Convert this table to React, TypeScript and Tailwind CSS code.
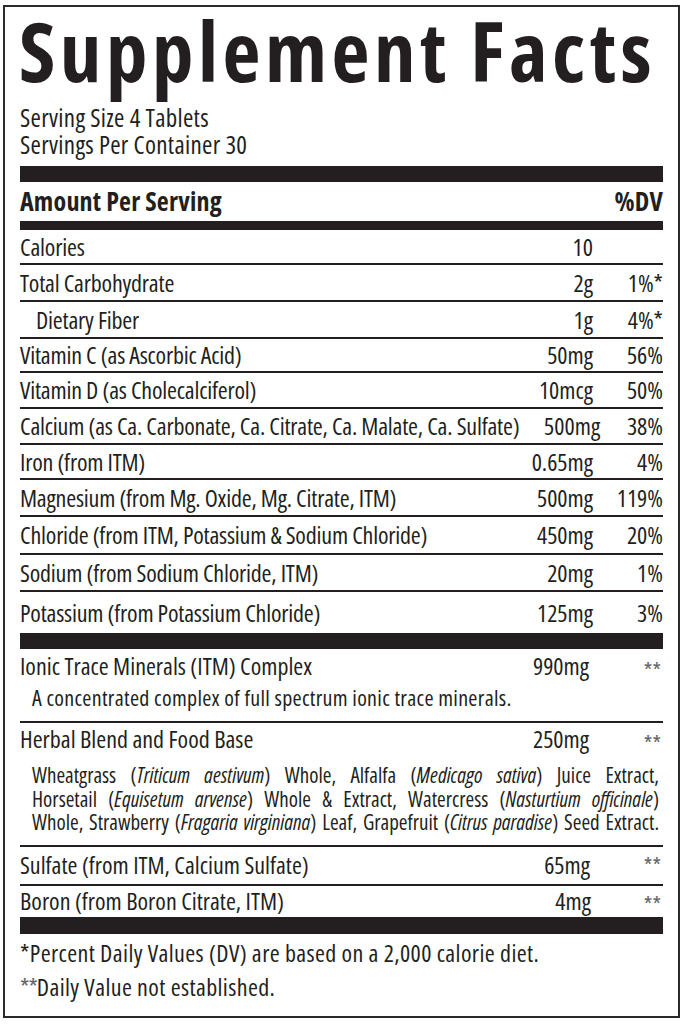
const font = "font-['Open_Sans',sans-serif] font-stretch-[75%]";
const line = "border-b-2 border-[#231f20]";

type Row = { name: string; amount: string; dv: string; indent?: boolean; h: string };

const mainRows: Row[] = [
  { name: "Calories", amount: "10", dv: "", h: "h-[35px]" },
  { name: "Total Carbohydrate", amount: "2g", dv: "1%*", h: "h-[37px]" },
  { name: "Dietary Fiber", amount: "1g", dv: "4%*", indent: true, h: "h-[37px]" },
  { name: "Vitamin C (as Ascorbic Acid)", amount: "50mg", dv: "56%", h: "h-[34px]" },
  { name: "Vitamin D (as Cholecalciferol)", amount: "10mcg", dv: "50%", h: "h-[36px]" },
  { name: "Calcium (as Ca. Carbonate, Ca. Citrate, Ca. Malate, Ca. Sulfate)", amount: "500mg", dv: "38%", h: "h-[36px]" },
  { name: "Iron (from ITM)", amount: "0.65mg", dv: "4%", h: "h-[35px]" },
  { name: "Magnesium (from Mg. Oxide, Mg. Citrate, ITM)", amount: "500mg", dv: "119%", h: "h-[37px]" },
  { name: "Chloride (from ITM, Potassium & Sodium Chloride)", amount: "450mg", dv: "20%", h: "h-[38px]" },
  { name: "Sodium (from Sodium Chloride, ITM)", amount: "20mg", dv: "1%", h: "h-[37px]" },
  { name: "Potassium (from Potassium Chloride)", amount: "125mg", dv: "3%", h: "h-[41px]" },
];

function Stars() {
  return <span className="text-[22px] leading-none text-[#666] self-start mt-[6px]">**</span>;
}

export default function App() {
  return (
    <div className={`bg-white min-h-screen pt-[5px] px-[3px] text-[#231f20] ${font}`}>
      <div className="w-[677px] border-2 border-[#2b2b2b] px-[15px] pt-[0px] pb-[12px]">
        {/* Title */}
        <h1 className="text-[83px] font-bold leading-[86px] font-stretch-[87.5%] tracking-[4.5px] -ml-[1px] whitespace-nowrap">
          Supplement Facts
        </h1>
        <div className="text-[25px] leading-[27px] mt-[11px] tracking-[0.3px]">
          <div>Serving Size 4 Tablets</div>
          <div>Servings Per Container 30</div>
        </div>

        <div className="h-[16px] bg-[#231f20] mt-[8px]" />
        <div className="flex items-center justify-between h-[39px] font-bold text-[26px] tracking-[0.2px]">
          <span>Amount Per Serving</span>
          <span>%DV</span>
        </div>
        <div className="h-[9px] bg-[#231f20]" />

        {mainRows.map((r, i) => (
          <div
            key={r.name}
            className={`flex items-center ${r.h} text-[24px] leading-none ${i < mainRows.length - 1 ? line : ""}`}
          >
            <span className={`flex-1 whitespace-nowrap tracking-[-0.2px] ${r.indent ? "pl-[16px]" : ""}`}>{r.name}</span>
            <span className="w-[90px] text-right whitespace-nowrap">{r.amount}</span>
            <span className="w-[70px] text-right whitespace-nowrap">{r.dv}</span>
          </div>
        ))}

        <div className="h-[16px] bg-[#231f20]" />

        {/* ITM complex */}
        <div className={`${line} pt-[3px] pb-[11px] text-[24px]`}>
          <div className="flex items-center h-[28px]">
            <span className="flex-1 whitespace-nowrap">Ionic Trace Minerals (ITM) Complex</span>
            <span className="w-[90px] text-right pr-[4px]">990mg</span>
            <span className="w-[70px] flex justify-end h-full pr-[2px]"><Stars /></span>
          </div>
          <div className="pl-[12px] text-[22px] leading-[26px] mt-[4px] tracking-[0.3px] whitespace-nowrap">
            A concentrated complex of full spectrum ionic trace minerals.
          </div>
        </div>

        {/* Herbal blend */}
        <div className={`${line} pt-[2px] pb-[10px] text-[24px]`}>
          <div className="flex items-center h-[28px]">
            <span className="flex-1 whitespace-nowrap">Herbal Blend and Food Base</span>
            <span className="w-[90px] text-right pr-[4px]">250mg</span>
            <span className="w-[70px] flex justify-end h-full pr-[2px]"><Stars /></span>
          </div>
          <div className="pl-[12px] pr-[4px] text-[21px] leading-[23.5px] mt-[11px] text-justify [text-align-last:justify] whitespace-nowrap">
            <div>
              Wheatgrass (<i>Triticum aestivum</i>) Whole, Alfalfa (<i>Medicago sativa</i>) Juice Extract,
            </div>
            <div>
              Horsetail (<i>Equisetum arvense</i>) Whole &amp; Extract, Watercress (<i>Nasturtium officinale</i>)
            </div>
            <div>
              Whole, Strawberry (<i>Fragaria virginiana</i>) Leaf, Grapefruit (<i>Citrus paradise</i>) Seed Extract.
            </div>
          </div>
        </div>

        <div className={`flex items-center h-[39px] text-[24px] ${line}`}>
          <span className="flex-1 whitespace-nowrap">Sulfate (from ITM, Calcium Sulfate)</span>
          <span className="w-[90px] text-right pr-[3px]">65mg</span>
          <span className="w-[70px] flex justify-end h-full pr-[2px]"><Stars /></span>
        </div>
        <div className="flex items-center h-[31px] text-[24px]">
          <span className="flex-1 whitespace-nowrap">Boron (from Boron Citrate, ITM)</span>
          <span className="w-[90px] text-right pr-[2px]">4mg</span>
          <span className="w-[70px] flex justify-end h-full pr-[2px]"><Stars /></span>
        </div>
        <div className="h-[17px] bg-[#231f20]" />

        <div className="text-[24px] mt-[2px] leading-[34px] tracking-[0.4px]">
          <div>*Percent Daily Values (DV) are based on a 2,000 calorie diet.</div>
          <div>
            <span className="text-[#666] tracking-[-1px]">**</span>Daily Value not established.
          </div>
        </div>
      </div>
    </div>
  );
}
